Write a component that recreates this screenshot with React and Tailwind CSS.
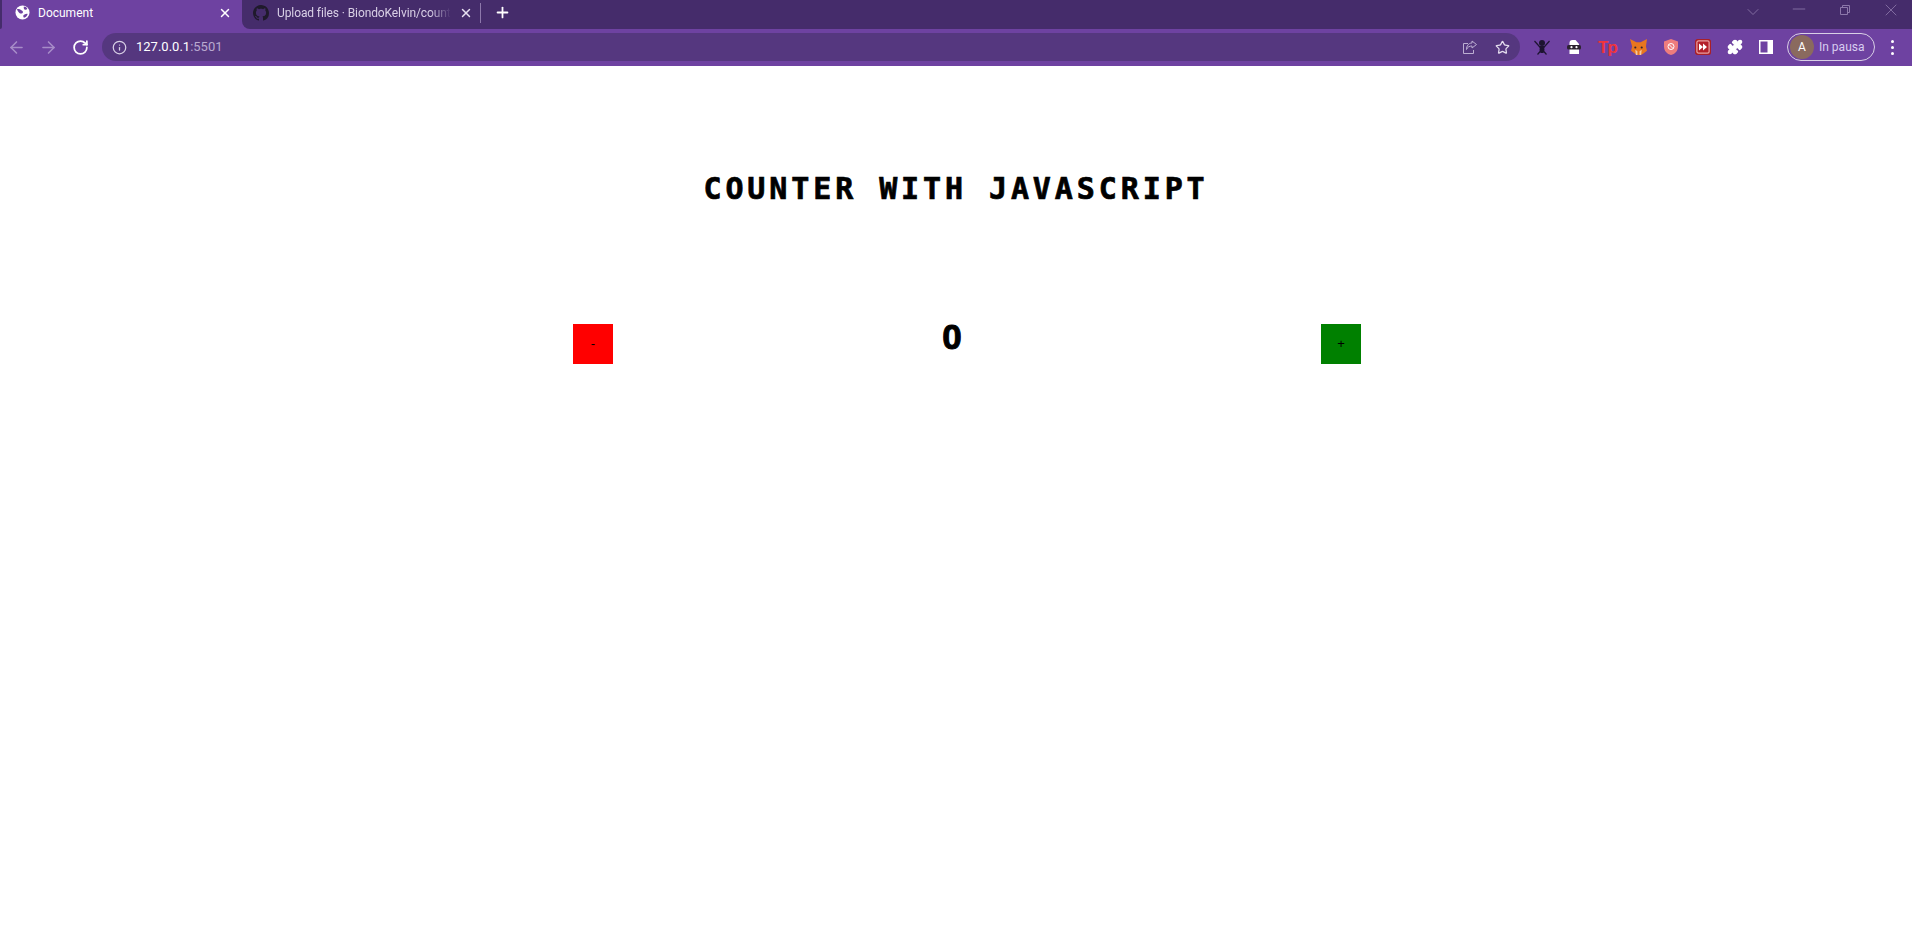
import { ArrowLeft, ArrowRight, RotateCw, Info, Star, Puzzle, X, Plus, ChevronDown, Minus } from 'lucide-react';

const GlobeSolid = () => (
  <svg viewBox="0 0 16 16" className="w-[15px] h-[15px] shrink-0">
    <circle cx="8" cy="8" r="7.500" fill="#fff" />
    <path d="M2 4.500c1.500-.5 3-.5 4 .5s2.500 1 2.500 2.500S6.500 9.500 5.500 9 3 7 2 4.500zM9.500 1.500c1.500 0 3 1 3.500 2s-1.500 2-2.500 1.500-1.500-2-1-3.500zM9 11c1-1 3-2 4.500-1.500-.5 2-2 3.500-4 4-.5-1-1-1.500-.5-2.500z" fill="#6e42a1" />
  </svg>
);

const GithubMark = () => (
  <svg viewBox="0 0 16 16" className="w-4 h-4 shrink-0" fill="#1f1a2b">
    <path d="M8 0C3.58 0 0 3.58 0 8c0 3.54 2.29 6.53 5.47 7.59.4.07.55-.17.55-.38 0-.19-.01-.82-.01-1.49-2.01.37-2.53-.49-2.69-.94-.09-.23-.48-.94-.82-1.13-.28-.15-.68-.52-.01-.53.63-.01 1.08.58 1.23.82.72 1.21 1.87.87 2.33.66.07-.52.28-.87.51-1.07-1.78-.2-3.64-.89-3.64-3.95 0-.87.31-1.59.82-2.15-.08-.2-.36-1.02.08-2.12 0 0 .67-.21 2.2.82.64-.18 1.32-.27 2-.27s1.36.09 2 .27c1.53-1.04 2.2-.82 2.2-.82.44 1.1.16 1.92.08 2.12.51.56.82 1.27.82 2.15 0 3.07-1.87 3.75-3.65 3.95.29.25.54.73.54 1.48 0 1.07-.01 1.93-.01 2.2 0 .21.15.46.55.38A8.01 8.01 0 0 0 16 8c0-4.42-3.58-8-8-8z" />
  </svg>
);

const ShareBox = () => (
  <svg viewBox="0 0 16 16" className="w-4 h-4" fill="none" stroke="#bcaed2" strokeWidth="1">
    <path d="M6 4.500H1.500v10h10V11" />
    <path d="M10 2l4.500 3.500L10 9V7C7.500 7 5.500 8 4.500 10.500 4.500 7 6.500 4 10 4z" />
  </svg>
);

const Pirate = () => (
  <svg viewBox="0 0 16 16" className="w-4 h-4" fill="#1d1430">
    <circle cx="8" cy="4" r="3" />
    <path d="M6 7h4l.5 4-1 3h-3l-1-3z" />
    <path d="M.5 2l12 13.500M15.500 2l-12 13.500" stroke="#1d1430" strokeWidth="1.200" />
  </svg>
);

const Ninja = () => (
  <svg viewBox="0 0 16 16" className="w-4 h-4">
    <path d="M3.500 4q0-3 3-3h3l3.500 4v10H3.500z" fill="#fff" />
    <rect x="1" y="6" width="14" height="4.500" rx="1.500" fill="#2c2230" />
    <circle cx="5.500" cy="8.200" r="1.100" fill="#fff" />
    <circle cx="10.500" cy="8.200" r="1.100" fill="#fff" />
  </svg>
);

const Fox = () => (
  <svg viewBox="0 0 16 16" className="w-[17px] h-[17px]">
    <path d="M0 0l6 3h4l6-3-1 7 1 4-4 3-2 1H7l-2-1-4-3 1-4z" fill="#e8761f" />
    <path d="M5 10l2 1.500V15H5.500zM11 10l-2 1.500V15h1.500z" fill="#f5c9a0" />
    <circle cx="5" cy="8" r="1" fill="#2c2230" />
    <circle cx="11" cy="8" r="1" fill="#2c2230" />
  </svg>
);

const Shield = () => (
  <svg viewBox="0 0 16 16" className="w-4 h-4">
    <path d="M8 0l7 2.500v5C15 12 12 15 8 16 4 15 1 12 1 7.500v-5z" fill="#ee7d7d" />
    <circle cx="8" cy="7.500" r="3" fill="none" stroke="#fff" strokeWidth="1" />
    <path d="M6 5.500l4 4" stroke="#fff" strokeWidth="1" />
  </svg>
);

const FastForward = () => (
  <svg viewBox="0 0 16 16" className="w-4 h-4">
    <rect x="0.500" y="0.500" width="15" height="15" rx="3" fill="#e8a0a0" stroke="#a81f28" strokeWidth="1.500" />
    <rect x="2.500" y="2.500" width="11" height="11" rx="1" fill="#b3202a" />
    <path d="M4 4.500L8 8l-4 3.500zM8 4.500L12 8l-4 3.500z" fill="#fff" />
  </svg>
);

const SidePanel = () => (
  <svg viewBox="0 0 14 14" className="w-[14px] h-[14px]">
    <path d="M0 0h14v14H0z" fill="#fff" />
    <path d="M1.500 1.500h7v11h-7z" fill="#6e42a1" />
  </svg>
);

const RestoreIcon = () => (
  <svg viewBox="0 0 10 10" className="w-[10px] h-[10px]" fill="none" stroke="currentColor" strokeWidth="1">
    <path d="M.5 2.500h7v7h-7zM2.500 2.500v-2h7v7h-2" />
  </svg>
);

export default function App() {
  return (
    <div className="h-screen bg-white font-['Roboto',sans-serif] overflow-hidden">
      <div className="flex h-[29px] bg-[#6e42a1]">
        <div className="w-[2px] bg-[#452c6b] rounded-br-sm" />
        <div className="flex items-center w-[240px] pb-[4px] pl-[13px] pr-[10px] gap-[8px] text-white">
          <GlobeSolid />
          <span className="flex-1 text-xs whitespace-nowrap">Document</span>
          <X size={14} strokeWidth={2.5} />
        </div>
        <div className="flex flex-1 bg-[#452c6b] rounded-bl-lg">
          <div className="flex items-center w-[238px] pb-[4px] pl-[11px] pr-[8px] gap-[8px] text-[#d9d0e6]">
            <GithubMark />
            <span className="flex-1 text-xs tracking-[-0.1px] whitespace-nowrap [mask-image:linear-gradient(to_right,black_88%,transparent)]">Upload files · BiondoKelvin/count</span>
            <X size={14} strokeWidth={2.5} className="text-[#e6dff0] shrink-0" />
          </div>
          <div className="flex items-center gap-[13px] pb-[4px]">
            <div className="w-px h-[20px] bg-[#8d78ab]" />
            <Plus size={17} strokeWidth={2.5} className="text-white" />
          </div>
          <div className="flex-1" />
          <div className="flex items-start -mr-[2px] text-[#8d78ab]">
            <div className="flex justify-center pt-[2px] w-[46px]"><ChevronDown size={20} strokeWidth={1} /></div>
            <div className="flex justify-center w-[46px]"><Minus size={20} strokeWidth={1} className="-mt-px" /></div>
            <div className="flex justify-center pt-[5px] w-[46px]"><RestoreIcon /></div>
            <div className="flex justify-center w-[46px]"><X size={20} strokeWidth={1} /></div>
          </div>
        </div>
      </div>

      <div className="flex items-center h-[37px] pb-px bg-[#6e42a1] pl-[7px] pr-[8px]">
        <ArrowLeft size={19} className="text-[#a78cc8]" />
        <ArrowRight size={19} className="text-[#a78cc8] ml-[13px]" />
        <RotateCw size={17} strokeWidth={2.5} className="text-white ml-[14px]" />
        <div className="flex items-center flex-1 h-[28px] ml-[13px] pl-[10px] pr-[10px] bg-[#55377f] rounded-full">
          <Info size={15} className="text-[#d9d0e6]" />
          <span className="ml-[9px] text-[13px] text-white">127.0.0.1<span className="text-[#b9a9d0]">:5501</span></span>
          <div className="flex-1" />
          <ShareBox />
          <Star size={15} className="text-[#e4ddee] ml-[17px]" />
        </div>
        <div className="flex items-center gap-[16px] ml-[14px]">
          <Pirate />
          <Ninja />
          <span className="w-4 text-[17px] font-bold tracking-[-1px] text-[#f0343c] leading-none font-['Liberation_Sans',sans-serif]">Tp</span>
          <Fox />
          <Shield />
          <FastForward />
          <Puzzle size={16} className="text-white fill-white" />
          <SidePanel />
        </div>
        <div className="flex items-center w-[88px] h-[28px] ml-[14px] border border-[#d9d0e6] rounded-full pl-[2px]">
          <div className="flex items-center justify-center w-[24px] h-[24px] rounded-full bg-[#8a6a5e] text-white text-xs">A</div>
          <span className="ml-[5px] text-xs text-[#d8cdf0]">In pausa</span>
        </div>
        <div className="flex flex-col gap-[3px] ml-[16px] mr-[10px]">
          <span className="w-[3px] h-[3px] bg-white rounded-full" />
          <span className="w-[3px] h-[3px] bg-white rounded-full" />
          <span className="w-[3px] h-[3px] bg-white rounded-full" />
        </div>
      </div>

      <h1 className="mt-[103px] text-center text-[30px] leading-[40px] font-bold tracking-[3.9px] text-black [-webkit-text-stroke:0.7px_black] font-['DejaVu_Sans_Mono',monospace]">
        COUNTER WITH JAVASCRIPT
      </h1>

      <div className="flex items-start w-[788px] mt-[115px] ml-[573px]">
        <button className="flex items-center justify-center w-[40px] h-[40px] bg-[#ff0000] text-[13px] text-black font-['Liberation_Sans',sans-serif]">-</button>
        <div className="flex-1 pr-[30px] text-center text-[35px] leading-[26px] font-bold text-black [-webkit-text-stroke:1px_black] font-['Liberation_Sans',sans-serif]">0</div>
        <button className="flex items-center justify-center w-[40px] h-[40px] bg-[#008000] text-[13px] text-black font-['Liberation_Sans',sans-serif]">+</button>
      </div>
    </div>
  );
}
